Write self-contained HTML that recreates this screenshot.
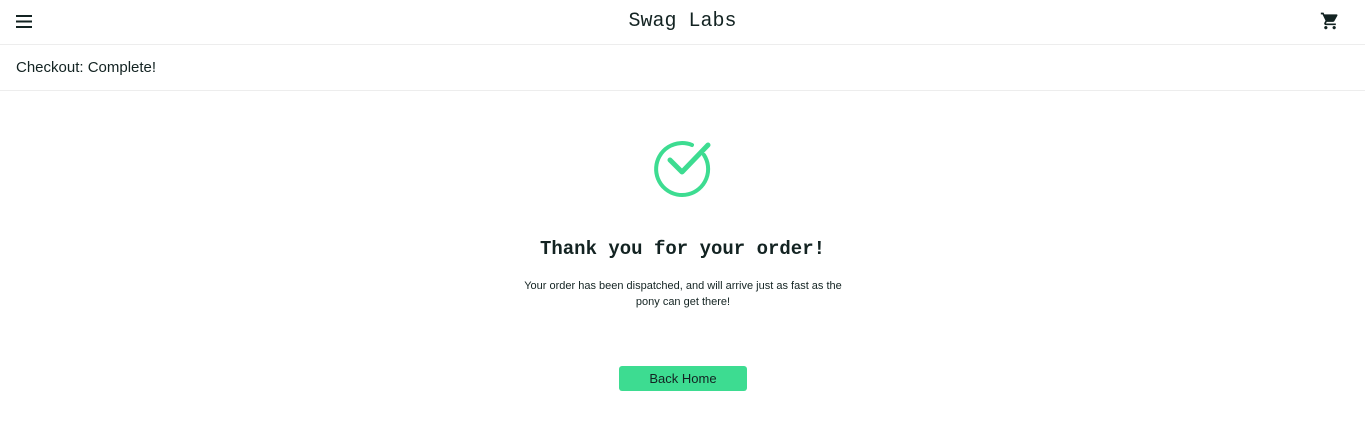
<!DOCTYPE html>
<html><head><style>
body{margin:0;background:#fff;font-family:"Liberation Sans",sans-serif;color:#132322;width:1365px;height:441px;overflow:hidden;position:relative}
.hdr{position:absolute;left:0;top:0;width:1365px;height:44px;border-bottom:1px solid #ededed}
.logo{position:absolute;left:0;width:1365px;text-align:center;top:10px;font-family:"Liberation Mono",monospace;font-size:20px;color:#132322}
.sub{position:absolute;top:45px;left:0;width:1365px;height:45px;border-bottom:1px solid #ededed}
.sub span{position:absolute;left:16px;top:14px;font-size:15px}
h2{position:absolute;top:238px;left:0;width:1365px;text-align:center;margin:0;font-family:"Liberation Mono",monospace;font-size:19px;font-weight:bold;color:#132322}
.txt{position:absolute;top:278px;left:513px;width:340px;text-align:center;font-size:11px;line-height:16px}
.btn{position:absolute;left:619px;top:366px;width:128px;height:25px;background:#3ddc91;border-radius:3px;text-align:center;line-height:25px;font-size:13px;color:#132322}
</style></head><body>
<div class="hdr">
<svg style="position:absolute;left:16px;top:15px" width="16" height="13"><rect y="0" width="16" height="2" fill="#132322"/><rect y="5.5" width="16" height="2" fill="#132322"/><rect y="11" width="16" height="2" fill="#132322"/></svg>
<div class="logo">Swag Labs</div>
<svg style="position:absolute;left:1320px;top:11px" width="20" height="20" viewBox="0 0 24 24"><path fill="#132322" d="M7 18c-1.1 0-2 .9-2 2s.9 2 2 2 2-.9 2-2-.9-2-2-2zM1 2v2h2l3.6 7.59-1.35 2.45c-.16.28-.25.61-.25.96 0 1.1.9 2 2 2h12v-2H7.42c-.14 0-.25-.11-.25-.25l.03-.12.9-1.63h7.45c.75 0 1.41-.41 1.750-1.03l3.58-6.49A1 1 0 0 0 20 4H5.21l-.94-2H1zm16 16c-1.1 0-2 .9-2 2s.9 2 2 2 2-.9 2-2-.9-2-2-2z"/></svg>
</div>
<div class="sub"><span>Checkout: Complete!</span></div>
<svg style="position:absolute;left:650px;top:138px" width="64" height="62" viewBox="650 138 64 62"><path d="M704 155 A26 26 0 1 1 692 145" fill="none" stroke="#3ddc91" stroke-width="4" stroke-linecap="round"/><path d="M670 160 L682 172 L708 145" fill="none" stroke="#3ddc91" stroke-width="5" stroke-linecap="round" stroke-linejoin="round"/></svg>
<h2>Thank you for your order!</h2>
<div class="txt">Your order has been dispatched, and will arrive just as fast as the pony can get there!</div>
<div class="btn">Back Home</div>
</body></html>
